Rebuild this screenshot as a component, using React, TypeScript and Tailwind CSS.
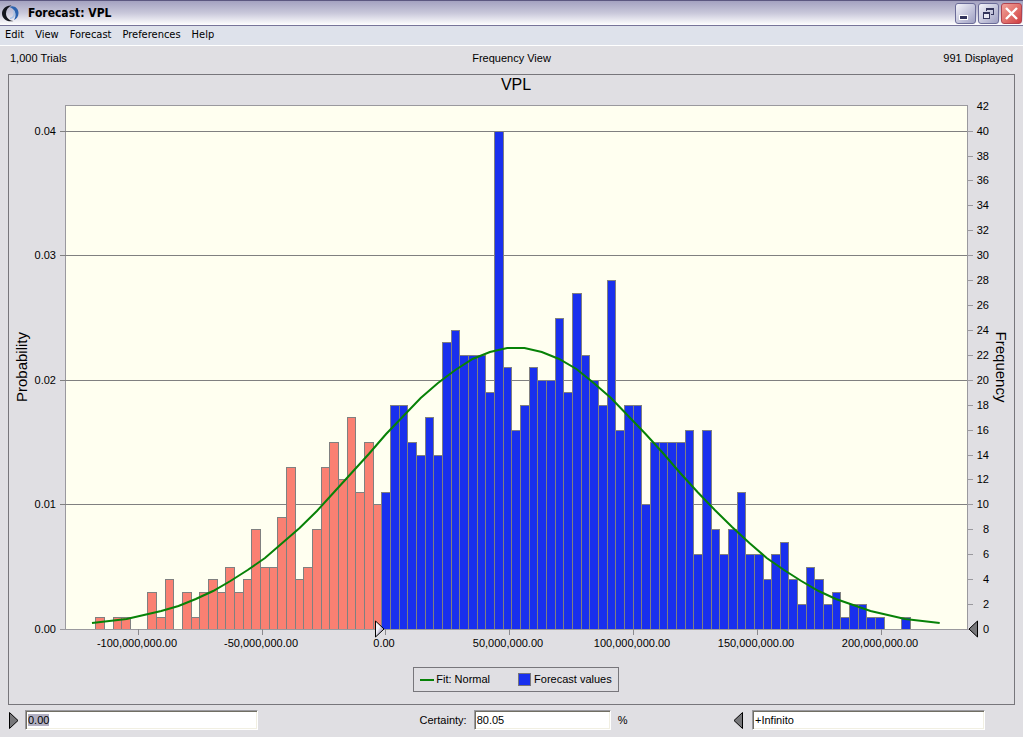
import { useEffect, useRef } from 'react'

const FREQUENCIES = [
    1, 0, 1, 1, 0, 0, 3, 1, 4, 0, 3, 1, 3, 4, 3, 5, 3, 4, 8, 5, 5, 9, 13, 4, 5, 8, 13, 15, 12, 17, 11, 15, 10,
    11, 18, 18, 15, 14, 17, 14, 23, 24, 22, 22, 22, 19, 40, 21, 16, 18, 21, 20, 20, 25, 19, 27, 22, 20, 18, 28,
    16, 18, 18, 10, 15, 15, 15, 15, 16, 6, 16, 8, 6, 8, 11, 6, 6, 4, 6, 7, 4, 2, 5, 4, 2, 3, 1, 2, 2, 1, 1, 0, 0, 1,
]
// first bin that is inside the certainty range
const FIRST_CERTAIN = 33

const X_LABELS = ['-100,000,000.00', '-50,000,000.00', '0.00', '50,000,000.00', '100,000,000.00', '150,000,000.00', '200,000,000.00']
const MENU = ['Edit', 'View', 'Forecast', 'Preferences', 'Help']

// Plot area inside the chart's viewBox
const LEFT = 56
const RIGHT = 958
const TOP = 10
const BASE = 534

const yOf = (freq: number) => Math.round(BASE - freq * 12.46)
const binX = (i: number) => Math.floor(86.8 + i * 8.665)
const tickX = (i: number) => Math.floor(129.3 + i * 123.8)

// Fitted normal curve
const curve = Array.from({ length: 50 }, (_, k) => {
    const x = 83 + k * 17.3
    const z = (x - 507) / 151.5
    return `${x.toFixed(1)},${Math.round(BASE - 281 * Math.exp((-z * z) / 2))}`
}).join(' ')

function Marker({ dir }: { dir: 'left' | 'right' }) {
    return (
        <svg width="10" height="17" viewBox="0 0 10 17" className="shrink-0" aria-hidden="true">
            <path
                d={dir === 'right' ? 'M.5 .5V16.5L9 8.5Z' : 'M9.5 .5V16.5L1 8.5Z'}
                fill="#77777a"
                stroke="#000"
            />
        </svg>
    )
}

function Bar({ index, freq }: { index: number; freq: number }) {
    const x = binX(index)
    const y = yOf(freq)
    const width = binX(index + 1) - x
    return (
        <>
            <rect x={x} y={y} width={width + 1} height={BASE - y} fill="#808080" />
            <rect x={x + 1} y={y + 1} width={width - 1} height={BASE - y - 1} fill={index < FIRST_CERTAIN ? '#fa8072' : '#1930ee'} />
        </>
    )
}

function Chart() {
    return (
        <svg viewBox="0 0 1005 560" className="block h-auto w-full" role="img" aria-label="VPL">
            <defs>
                <linearGradient id="thumb" x1="0" y1="0" x2="1" y2="1">
                    <stop offset="0.4" stopColor="#f2f1f8" />
                    <stop offset="0.6" stopColor="#b9b6cf" />
                </linearGradient>
            </defs>

            <g shapeRendering="crispEdges">
                <rect x={LEFT + 0.5} y={TOP + 0.5} width={RIGHT - LEFT} height={BASE - TOP} fill="#fffff0" stroke="#9a999e" />
                {[10, 20, 30, 40].map(v => (
                    <line key={v} x1={LEFT - 5} x2={RIGHT} y1={yOf(v) + 0.5} y2={yOf(v) + 0.5} stroke="#808080" />
                ))}
                {FREQUENCIES.map((freq, i) => freq > 0 && <Bar key={i} index={i} freq={freq} />)}
                <line x1={LEFT - 5} x2={RIGHT} y1={BASE + 0.5} y2={BASE + 0.5} stroke="#9a999e" />
                {X_LABELS.map((label, i) => (
                    <line key={label} x1={tickX(i) + 0.5} x2={tickX(i) + 0.5} y1={BASE} y2={BASE + 6} stroke="#8a898e" />
                ))}
                {Array.from({ length: 21 }, (_, i) => (
                    <line key={i} x1={RIGHT} x2={RIGHT + 6} y1={yOf(i * 2) + 0.5} y2={yOf(i * 2) + 0.5} stroke="#9a999e" />
                ))}
            </g>

            <polyline points={curve} fill="none" stroke="#078207" strokeWidth="2" />

            <g fontSize="11" fill="#000">
                {[0, 10, 20, 30, 40].map(v => (
                    <text key={v} x="47" y={yOf(v) + 4} textAnchor="end">{(v / 1000).toFixed(2)}</text>
                ))}
                {Array.from({ length: 22 }, (_, i) => (
                    <text key={i} x="980" y={yOf(i * 2) + 4} textAnchor="end">{i * 2}</text>
                ))}
                {X_LABELS.map((label, i) => (
                    <text key={label} x={tickX(i) - 1} y={BASE + 18} textAnchor="middle">{label}</text>
                ))}
            </g>

            <g fontSize="15" fill="#000" textAnchor="middle">
                <text transform="translate(18 272) rotate(-90)">Probability</text>
                <text transform="translate(987 272) rotate(90)">Frequency</text>
            </g>

            <path d="M366.5 526V542L375 534Z" fill="url(#thumb)" stroke="#000" />
            <path d="M968.5 526V542L960 534Z" fill="#77777a" stroke="#000" />
        </svg>
    )
}

const capButton = 'flex size-[21px] items-center justify-center rounded-[3px] border'
const field = 'h-5 border border-t-[#9a999e] border-l-[#9a999e] border-r-white border-b-white bg-white pl-0.5 text-[11px] text-black shadow-[inset_1px_1px_0_#716f64,inset_-1px_-1px_0_#f1efe2] outline-none selection:bg-[#b2b0c2] selection:text-black'

export default function App() {
    const minRef = useRef<HTMLInputElement>(null)

    useEffect(() => {
        minRef.current?.focus()
        minRef.current?.select()
    }, [])

    return (
        <div className="flex min-h-screen flex-col bg-[#e0dfe3] font-['Liberation_Sans',Arial,sans-serif] text-[11px] text-black">
            <header className="flex h-[26px] items-center border-t border-b border-t-[#5c5880] border-b-[#77749a] bg-linear-to-b from-[#a4a2c0] via-[#c9c8da] to-white pr-px pl-0.5">
                <svg width="17" height="17" viewBox="0 0 17 17" fill="none" className="shrink-0" aria-hidden="true">
                    <path d="M9.500 .5C4 0 0 4 0 8.500C0 13.500 5 17.500 11.500 16C7 15.500 4 12.500 4 8.500C4 5 6 2 9.500 .5Z" fill="#14161e" />
                    <path d="M7.500 2C11.500 -.2 16.500 3 16.500 8C16.500 11.500 14.500 14 12 15C13.500 12.500 14.200 9 12.800 6.500C11.800 4.200 10 2.700 7.500 2Z" fill="#2b62ae" />
                    <path d="M11.500 5.500C13.500 9 12 13 8 13.500" stroke="#a6c1e6" strokeWidth="1.500" />
                </svg>
                <h1 className="ml-[9px] flex-1 font-['DejaVu_Sans_Condensed','DejaVu_Sans',sans-serif] text-xs font-bold">Forecast: VPL</h1>
                <div className="flex gap-0.5">
                    <button aria-label="Minimize" className={`${capButton} border-[#6b6c98] bg-linear-to-br from-[#f4f4fa] to-[#9fa0c2]`}>
                        <svg width="19" height="19" viewBox="0 0 19 19" shapeRendering="crispEdges">
                            <rect x="3" y="11" width="9" height="5" fill="#fff" />
                            <rect x="4" y="12" width="7" height="3" fill="#34355c" />
                        </svg>
                    </button>
                    <button aria-label="Restore" className={`${capButton} border-[#6b6c98] bg-linear-to-br from-[#f4f4fa] to-[#9fa0c2]`}>
                        <svg width="19" height="19" viewBox="0 0 19 19" fill="none" stroke="#34355c" shapeRendering="crispEdges">
                            <path d="M7.500 7V4.500H14.500V10.500H12M7 5.500H15" />
                            <path d="M4.500 8.500H10.500V14.500H4.500ZM4 9.500H11" fill="#e9e9f3" />
                        </svg>
                    </button>
                    <button aria-label="Close" className={`${capButton} border-[#b04450] bg-linear-to-br from-[#f0a39c] to-[#cf3a40]`}>
                        <svg width="19" height="19" viewBox="0 0 19 19" fill="none" stroke="#fff" strokeWidth="2.400">
                            <path d="M4 4L15 15M15 4L4 15" />
                        </svg>
                    </button>
                </div>
            </header>

            <nav className="flex h-5 items-center gap-[11px] border-b border-white bg-[#dee2eb] pl-[5px] font-['DejaVu_Sans_Condensed','DejaVu_Sans',sans-serif]">
                {MENU.map(item => (
                    <button key={item}>{item}</button>
                ))}
            </nav>

            <div className="mb-1 grid h-6 grid-cols-3 items-center px-2.5">
                <span>1,000 Trials</span>
                <span className="text-center">Frequency View</span>
                <span className="text-right">991 Displayed</span>
            </div>

            <main className="mx-2 border border-[#77767b] pb-3">
                <h2 className="pl-[9px] text-center text-base leading-5">VPL</h2>
                <Chart />
                <div className="mt-3 flex justify-center pl-[9px]">
                    <div className="flex h-[25px] items-center gap-7 border border-[#77767b] px-1.5">
                        <span className="flex items-center gap-0.5">
                            <i className="h-0.5 w-[14px] bg-[#078207]" />
                            Fit: Normal
                        </span>
                        <span className="flex items-center gap-[3px]">
                            <i className="size-[13px] border border-[#77767b] bg-[#1930ee]" />
                            Forecast values
                        </span>
                    </div>
                </div>
            </main>

            <footer className="mt-[5px] flex h-5 items-center justify-between pr-[38px] pl-[9px]">
                <div className="flex items-center gap-1.5">
                    <Marker dir="right" />
                    <input ref={minRef} aria-label="Minimum" defaultValue="0.00" className={`${field} w-[233px]`} />
                </div>
                <div className="flex items-center gap-[7px] pl-14">
                    <label htmlFor="certainty">Certainty:</label>
                    <input id="certainty" defaultValue="80.05" className={`${field} w-[137px]`} />
                    <span>%</span>
                </div>
                <div className="flex items-center gap-[9px]">
                    <Marker dir="left" />
                    <input aria-label="Maximum" defaultValue="+Infinito" className={`${field} w-[233px]`} />
                </div>
            </footer>
        </div>
    )
}
